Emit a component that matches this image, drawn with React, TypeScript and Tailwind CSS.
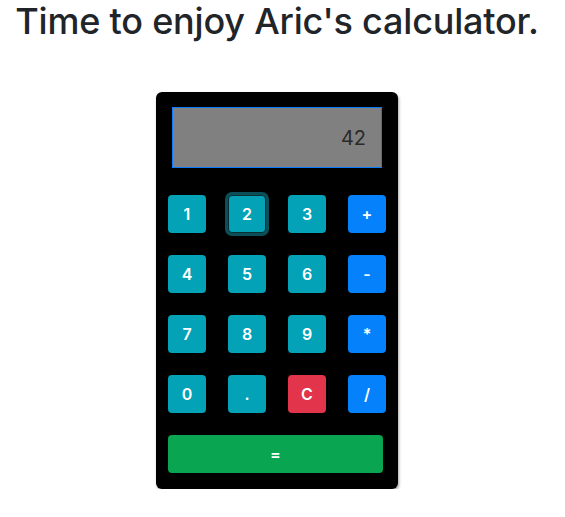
import React from 'react';

type Key = { label: string; color: string; focused?: boolean };

const rows: Key[][] = [
  [
    { label: '1', color: 'bg-[#03a2b6]' },
    { label: '2', color: 'bg-[#03a2b6]', focused: true },
    { label: '3', color: 'bg-[#03a2b6]' },
    { label: '+', color: 'bg-[#0581fb]' },
  ],
  [
    { label: '4', color: 'bg-[#03a2b6]' },
    { label: '5', color: 'bg-[#03a2b6]' },
    { label: '6', color: 'bg-[#03a2b6]' },
    { label: '-', color: 'bg-[#0581fb]' },
  ],
  [
    { label: '7', color: 'bg-[#03a2b6]' },
    { label: '8', color: 'bg-[#03a2b6]' },
    { label: '9', color: 'bg-[#03a2b6]' },
    { label: '*', color: 'bg-[#0581fb]' },
  ],
  [
    { label: '0', color: 'bg-[#03a2b6]' },
    { label: '.', color: 'bg-[#03a2b6]' },
    { label: 'C', color: 'bg-[#e2344a]' },
    { label: '/', color: 'bg-[#0581fb]' },
  ],
];

export default function App() {
  return (
    <div
      className="w-[554px] flex flex-col items-center bg-white"
      style={{ fontFamily: 'Inter, "Liberation Sans", sans-serif' }}
    >
      <h1 className="text-[36px] leading-[43px] font-medium text-[#212529] tracking-[-0.2px]">
        Time to enjoy Aric's calculator.
      </h1>

      <div className="mt-[49px] w-[242px] bg-black rounded-[6px] shadow-[1px_2px_3px_rgba(0,0,0,0.35)] pt-[15px] pb-[16px] px-[12px]">
        <div className="mx-[4px] h-[61px] bg-[#808080] border border-[#0a7bff] flex items-center justify-end pr-[15px] text-[20px] text-[#2a2a2a]">
          42
        </div>

        <div className="mt-[27px] flex flex-col gap-[22px]">
          {rows.map((row, i) => (
            <div key={i} className="flex gap-[22px]">
              {row.map(k => (
                <button
                  key={k.label}
                  className={`${k.color} w-[38px] h-[38px] rounded-[4px] text-white text-[16px] font-semibold flex items-center justify-center ${
                    k.focused ? 'border border-[#0a2f35] shadow-[0_0_0_3px_#0b4f59]' : ''
                  }`}
                >
                  {k.label}
                </button>
              ))}
            </div>
          ))}
          <button className="w-[215px] h-[38px] rounded-[4px] bg-[#0aa550] text-white text-[16px] font-semibold">
            =
          </button>
        </div>
      </div>
    </div>
  );
}
